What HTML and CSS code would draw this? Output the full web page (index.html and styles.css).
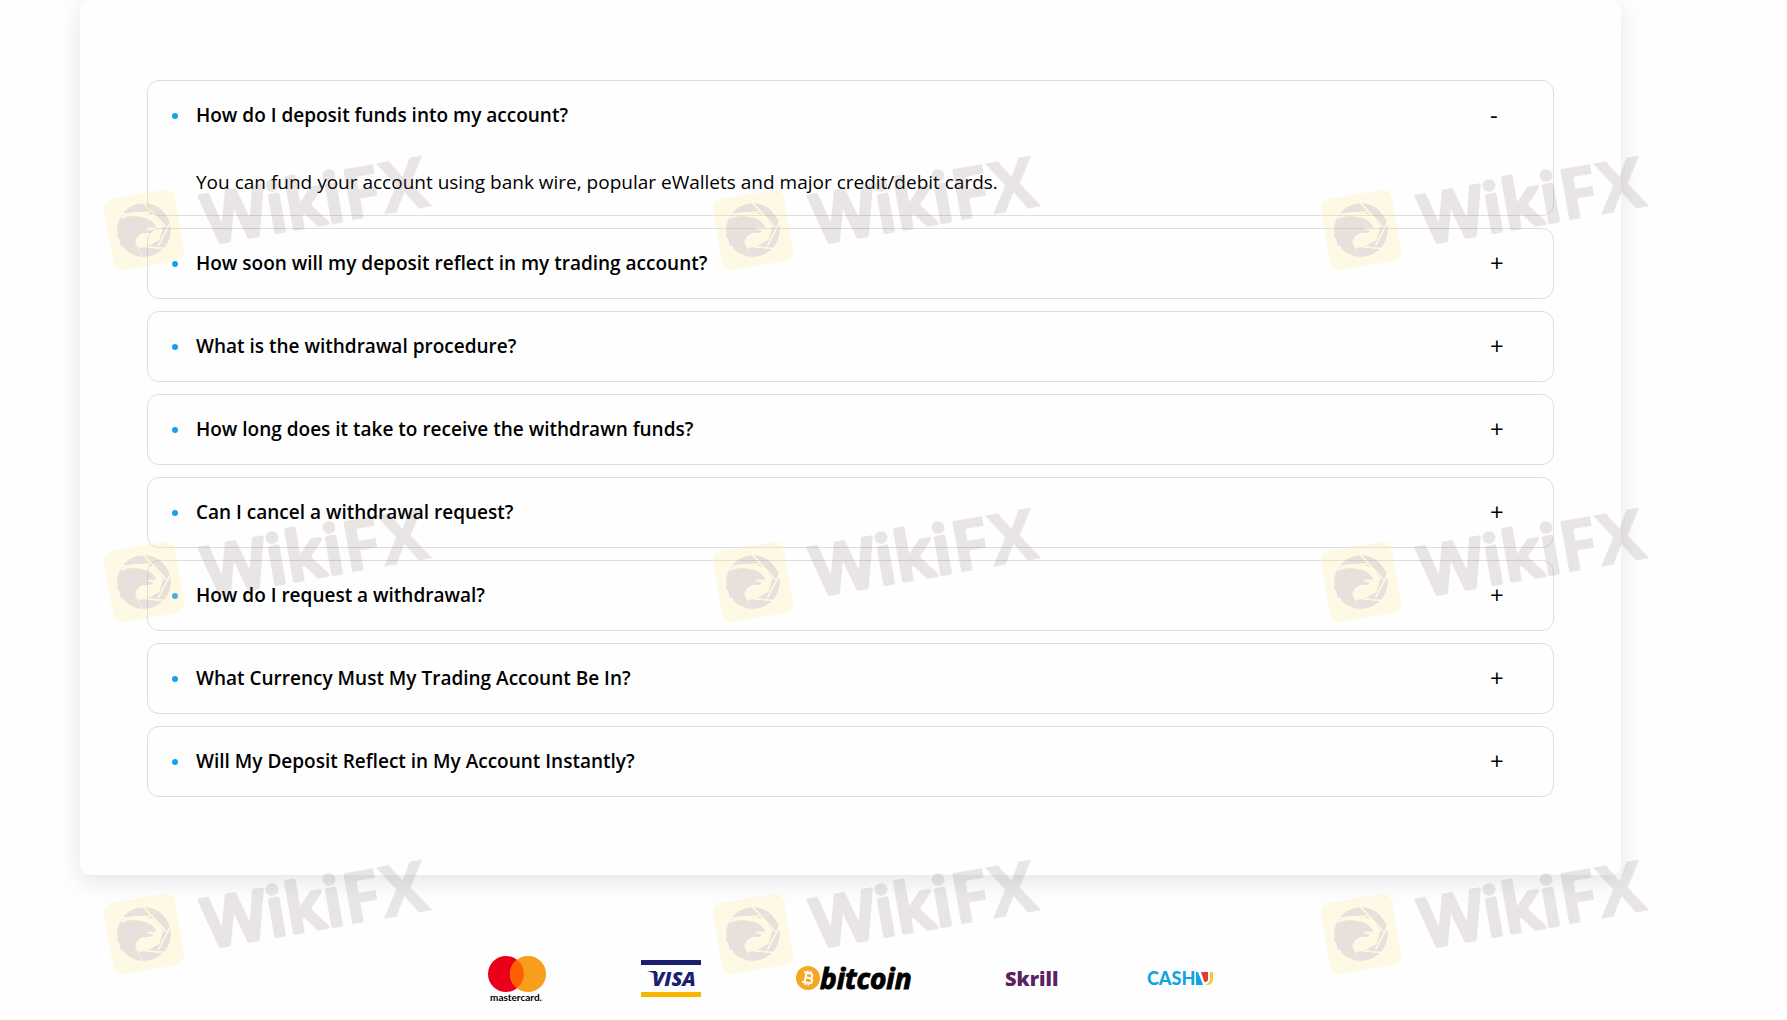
FILE: index.html
```html
<!DOCTYPE html>
<html lang="en">
<head>
  <meta charset="UTF-8">
  <meta name="viewport" content="width=device-width, initial-scale=1">
  <title>Deposits and Withdrawals FAQ</title>
  <link rel="stylesheet" href="styles.css">
</head>
<body>
  <main class="page">
    <section class="faq-card">
      <div class="faq-item open">
        <button class="faq-question" type="button" aria-expanded="true" aria-controls="answer-1"><span class="dot"></span><span class="label">How do I deposit funds into my account?</span><span class="sign">-</span></button>
        <p class="faq-answer" id="answer-1">You can fund your account using bank wire, popular eWallets and major credit/debit cards.</p>
      </div>
      <div class="faq-item">
        <button class="faq-question" type="button" aria-expanded="false"><span class="dot"></span><span class="label">How soon will my deposit reflect in my trading account?</span><span class="sign">+</span></button>
      </div>
      <div class="faq-item">
        <button class="faq-question" type="button" aria-expanded="false"><span class="dot"></span><span class="label">What is the withdrawal procedure?</span><span class="sign">+</span></button>
      </div>
      <div class="faq-item">
        <button class="faq-question" type="button" aria-expanded="false"><span class="dot"></span><span class="label">How long does it take to receive the withdrawn funds?</span><span class="sign">+</span></button>
      </div>
      <div class="faq-item">
        <button class="faq-question" type="button" aria-expanded="false"><span class="dot"></span><span class="label">Can I cancel a withdrawal request?</span><span class="sign">+</span></button>
      </div>
      <div class="faq-item">
        <button class="faq-question" type="button" aria-expanded="false"><span class="dot"></span><span class="label">How do I request a withdrawal?</span><span class="sign">+</span></button>
      </div>
      <div class="faq-item">
        <button class="faq-question" type="button" aria-expanded="false"><span class="dot"></span><span class="label">What Currency Must My Trading Account Be In?</span><span class="sign">+</span></button>
      </div>
      <div class="faq-item">
        <button class="faq-question" type="button" aria-expanded="false"><span class="dot"></span><span class="label">Will My Deposit Reflect in My Account Instantly?</span><span class="sign">+</span></button>
      </div>
    </section>

    <footer class="payments">
      <svg class="pay-logo" width="58" height="46" viewBox="0 0 58 46">
        <circle cx="18" cy="18" r="18" fill="#eb001b"/>
        <circle cx="40" cy="18" r="18" fill="#f79e1b"/>
        <path d="M29 3.8a18 18 0 0 1 0 28.4a18 18 0 0 1 0-28.4z" fill="#ff5f00"/>
        <text class="mc-text" x="2" y="45">mastercard.</text>
      </svg>
      <svg class="pay-logo" width="60" height="38" viewBox="0 0 60 38">
        <rect width="60" height="5" fill="#1a1f71"/>
        <rect y="32" width="60" height="5" fill="#f7b600"/>
        <path d="M6 11h9l2 5c-2-2-6-4-11-5z" fill="#1a1f71"/>
        <text class="visa-text" x="11" y="26">VISA</text>
      </svg>
      <svg class="pay-logo" width="114" height="26" viewBox="0 0 114 26">
        <circle cx="12" cy="12" r="12" fill="#f5a623"/>
        <g transform="rotate(12 12 12)" fill="none" stroke="#fff" stroke-width="2">
          <path d="M7 7h6.500a2.300 2.300 0 0 1 0 4.800H9.500M9.500 7v9.800M7 16.800h7a2.500 2.500 0 0 0 0-5h-1"/>
          <path d="M10.500 4.500v3M13.500 4.500v3M10.500 16.500v3M13.500 16.500v3" stroke-width="1.500"/>
        </g>
        <text class="btc-text" x="24" y="23">bitcoin</text>
      </svg>
      <svg class="pay-logo" width="49" height="20" viewBox="0 0 49 20">
        <text class="skrill-text" x="0" y="17">Skrill</text>
      </svg>
      <svg class="pay-logo" width="65" height="16" viewBox="0 0 65 16">
        <text class="cash-text" x="-2" y="14">CASH</text>
        <path d="M47 1h2l5 13h-7z" fill="#13a3e3"/>
        <path d="M52 1h7v7q0 3-3 3-1 0-2-4z" fill="#e53935"/>
        <path d="M61 1h3v7q0 5-5 6h-3q5-2 5-6z" fill="#fbc531"/>
      </svg>
    </footer>
  </main>

  <svg class="watermark" aria-hidden="true">
    <defs>
      <mask id="aperture" maskUnits="userSpaceOnUse" x="40" y="70" width="190" height="190">
        <circle cx="132" cy="160" r="81" fill="#fff"/>
        <path d="M62 120Q100 98 140 110L165 116 190 150 178 190 150 206 118 214 90 190z" fill="#000"/>
        <path d="M128 76L198 152M214 132L176 206M200 216L112 208M126 246L108 200M56 114L150 106" fill="none" stroke="#000" stroke-width="5"/>
      </mask>
      <g id="mark" transform="rotate(-10)">
        <rect x="-36" y="-36" width="72" height="72" rx="9" fill="#ffe68c" opacity=".22"/>
        <g fill="#7a62a8" opacity=".16" transform="rotate(10) scale(.3333) translate(-132 -160)">
          <circle cx="132" cy="160" r="81" mask="url(#aperture)"/>
          <path d="M66 126Q88 114 115 120Q140 122 155 134L168 148 166 154 150 152 136 158 160 160 152 168 128 170Q108 178 106 200L126 240 108 238 90 222 92 232 74 216 68 204 60 208 60 186 50 180 62 160 52 150z"/>
        </g>
        <g class="wm-text">
          <text class="wm-round" x="60" y="25">Wiki</text>
          <text class="wm-sharp" x="201" y="26">FX</text>
        </g>
      </g>
    </defs>
    <use href="#mark" x="144" y="230"/>
    <use href="#mark" x="753" y="230"/>
    <use href="#mark" x="1361" y="230"/>
    <use href="#mark" x="144" y="582"/>
    <use href="#mark" x="753" y="582"/>
    <use href="#mark" x="1361" y="582"/>
    <use href="#mark" x="144" y="934"/>
    <use href="#mark" x="753" y="934"/>
    <use href="#mark" x="1361" y="934"/>
  </svg>
</body>
</html>
```
FILE: styles.css
```css
* {
  box-sizing: border-box;
}
body {
  margin: 0;
  background: #fefefe;
  color: #000;
  font-family: "Open Sans", sans-serif;
  font-size: 19px;
  overflow-x: hidden;
}
.page {
  padding: 0 166px 0 80px;
}
.faq-card {
  display: flex;
  flex-direction: column;
  gap: 12px;
  padding: 80px 67px 78px;
  background: #fefefe;
  border-radius: 10px;
  box-shadow: 0 6px 24px rgba(0, 0, 0, 0.1);
}
.faq-item {
  border: 1px solid #dedede;
  border-radius: 12px;
}
.faq-question {
  display: flex;
  align-items: center;
  width: 100%;
  padding: 20px 47px 20px 24px;
  border: 0;
  background: none;
  color: #000;
  font-family: inherit;
  font-size: 19px;
  font-weight: 600;
  line-height: 29px;
  text-align: left;
  cursor: pointer;
}
.dot {
  width: 6px;
  height: 6px;
  margin-right: 18px;
  border-radius: 50%;
  background: #16a0f5;
}
.label {
  flex: 1;
}
.sign {
  width: 16px;
  padding-bottom: 2px;
  font-size: 24px;
  font-weight: 400;
  line-height: 27px;
}
.faq-answer {
  margin: 0;
  padding: 18px 48px 18px;
  line-height: 29px;
}
.payments {
  display: flex;
  justify-content: center;
  align-items: center;
  gap: 95px;
  padding: 81px 0 18px;
}
.pay-logo {
  overflow: visible;
}
.mc-text {
  font: 700 10px "Lato", sans-serif;
}
.visa-text {
  font: italic 800 20px "Open Sans", sans-serif;
  fill: #1a1f71;
}
.btc-text {
  font: italic 700 28px "Open Sans", sans-serif;
  stroke: #000;
  stroke-width: 1px;
}
.skrill-text {
  font: 800 20px "Open Sans", sans-serif;
  fill: #5c2161;
}
.cash-text {
  font: 900 18px "Lato", sans-serif;
  fill: #13a3e3;
}

/* brand mark laid over the whole page */
.watermark {
  position: absolute;
  top: 0;
  left: 0;
  width: 100%;
  height: 100%;
  pointer-events: none;
}
.wm-text {
  font-family: "Open Sans", sans-serif;
  fill: #6e5757;
  stroke: #6e5757;
  opacity: 0.14;
}
.wm-round {
  font-size: 68px;
  font-weight: 600;
  stroke-width: 4px;
  stroke-linejoin: round;
}
.wm-sharp {
  font-size: 71px;
  font-weight: 700;
}
```
